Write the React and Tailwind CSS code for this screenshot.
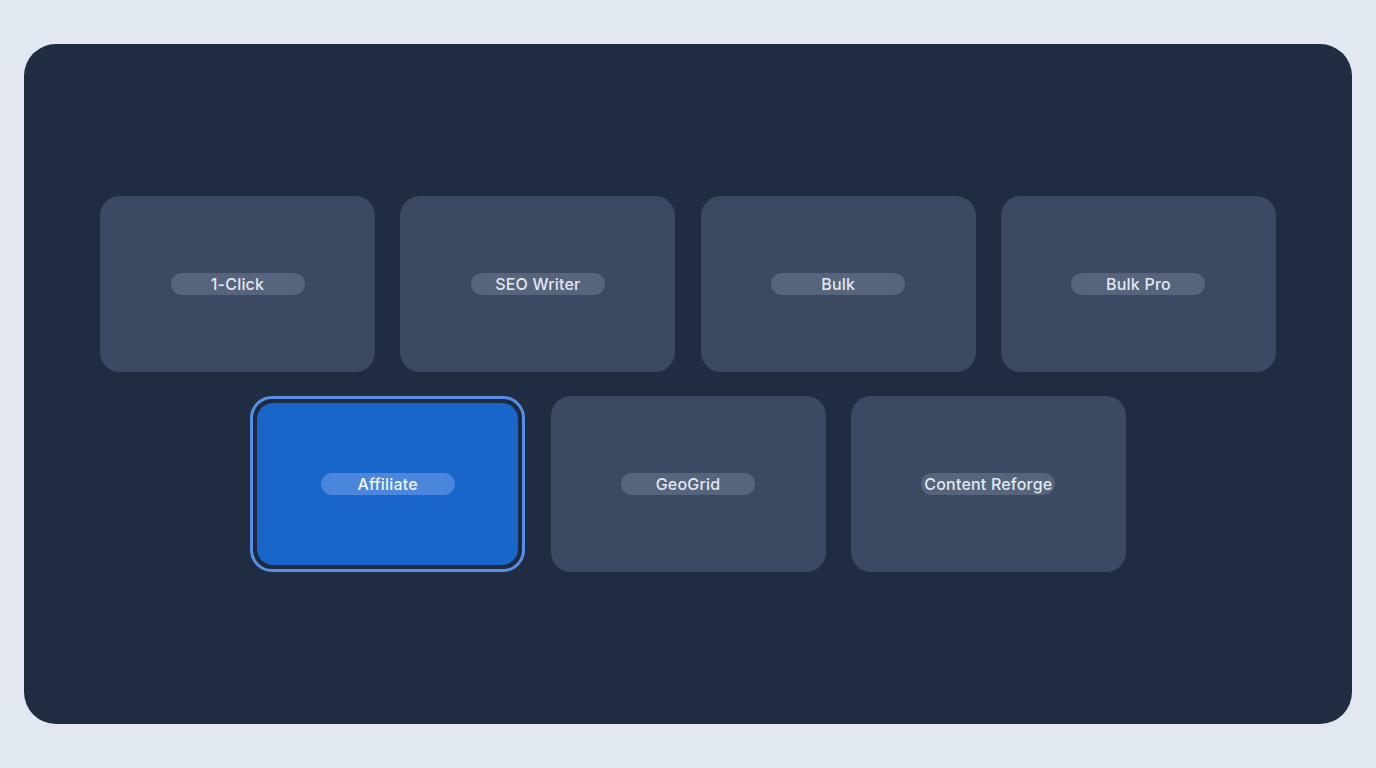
import React from 'react'

const modes = ['1-Click', 'SEO Writer', 'Bulk', 'Bulk Pro', 'Affiliate', 'GeoGrid', 'Content Reforge']

function Pill({ label, active }) {
  return (
    <span
      className={
        'inline-flex h-[22px] min-w-[134px] items-center justify-center rounded-full px-[3px] text-[16px] font-medium leading-none tracking-[0.2px] ' +
        (active ? 'bg-[#4a86dc] text-[#eef4ff]' : 'bg-[#56647c] text-[#e2e8f0]')
      }
    >
      {label}
    </span>
  )
}

function ModeCard({ label, active }) {
  if (active) {
    return (
      <div className="h-[176px] w-[275px] rounded-[22px] border-[3px] border-[#5590e6] bg-[#1e2a3f] p-[4px]">
        <div className="flex h-full w-full items-center justify-center rounded-[16px] bg-[#1866c9]">
          <Pill label={label} active />
        </div>
      </div>
    )
  }
  return (
    <div className="flex h-[176px] w-[275px] items-center justify-center rounded-[20px] bg-[#3b4962]">
      <Pill label={label} />
    </div>
  )
}

export default function App() {
  return (
    <div
      className="flex h-screen w-full bg-[#e2e8f0] px-6 py-11"
      style={{ fontFamily: 'Inter, "Noto Sans", sans-serif' }}
    >
      <div className="flex flex-1 items-center justify-center rounded-[32px] bg-[#1f2c41]">
        <div className="flex w-[1177px] flex-wrap justify-center gap-x-[25.33px] gap-y-6">
          {modes.map((m) => (
            <ModeCard key={m} label={m} active={m === 'Affiliate'} />
          ))}
        </div>
      </div>
    </div>
  )
}
